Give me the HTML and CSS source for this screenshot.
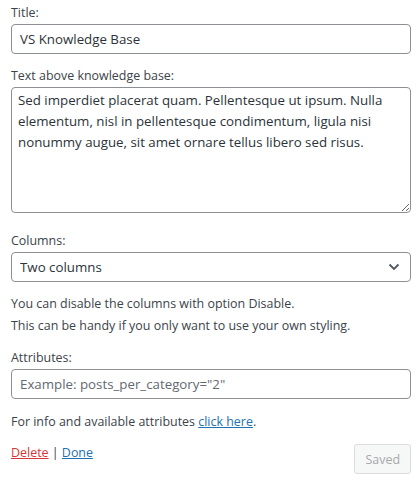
FILE: index.html
```html
<!DOCTYPE html>
<html>
<head>
<meta charset="utf-8">
<link rel="stylesheet" href="styles.css">
</head>
<body>
<form class="widget-form">
  <div class="field">
    <label class="label" for="title">Title:</label>
    <input class="text-input" id="title" type="text" value="VS Knowledge Base">
  </div>
  <div class="field field-text">
    <label class="label" for="intro">Text above knowledge base:</label>
    <textarea class="textarea" id="intro">Sed imperdiet placerat quam. Pellentesque ut ipsum. Nulla elementum, nisl in pellentesque condimentum, ligula nisi nonummy augue, sit amet ornare tellus libero sed risus.</textarea>
  </div>
  <div class="field field-select">
    <label class="label" for="cols">Columns:</label>
    <div class="select-wrap">
      <select class="select" id="cols"><option>Two columns</option></select>
      <svg class="chevron" width="12" height="8" viewBox="0 0 12 8"><path d="M1.5 1.5 L6 6 L10.5 1.5" fill="none" stroke="#50575e" stroke-width="1.8"/></svg>
    </div>
  </div>
  <p class="note">You can disable the columns with option Disable.<br>This can be handy if you only want to use your own styling.</p>
  <div class="field">
    <label class="label" for="attrs">Attributes:</label>
    <input class="text-input" id="attrs" type="text" placeholder="Example: posts_per_category=&quot;2&quot;">
  </div>
  <p class="info">For info and available attributes <a href="#" class="link">click here</a>.</p>
  <div class="actions">
    <div class="action-links"><a href="#" class="delete">Delete</a> | <a href="#" class="link">Done</a></div>
    <button type="button" class="saved" disabled>Saved</button>
  </div>
</form>
</body>
</html>
```
FILE: styles.css
```css
html, body {
  margin: 0;
  padding: 0;
  background: #fff;
}
body {
  font-family: "Open Sans", "Noto Sans", sans-serif;
  font-size: 12.45px;
  color: #3c434a;
}
.widget-form {
  width: 400px;
  margin: 0 0 0 11px;
  padding-top: 4px;
}
.field {
  display: flex;
  flex-direction: column;
}
.field-text {
  margin-top: 13px;
}
.field-select {
  margin-top: 19px;
}
.label {
  line-height: 18px;
  margin-bottom: 2px;
}
.text-input, .textarea, .select {
  box-sizing: border-box;
  width: 100%;
  font-family: inherit;
  font-size: 13.3px;
  color: #2c3338;
  border: 1px solid #8c8f94;
  border-radius: 4px;
  background: #fff;
  outline: none;
}
.text-input {
  height: 30px;
  padding: 0 8px;
  line-height: 2;
}
.text-input::placeholder {
  color: #646970;
}
.textarea {
  height: 126px;
  padding: 2px 6px;
  line-height: 21px;
  resize: vertical;
}
.select-wrap {
  position: relative;
}
.select {
  appearance: none;
  -webkit-appearance: none;
  height: 30px;
  padding: 0 24px 0 8px;
  line-height: 2;
}
.chevron {
  position: absolute;
  right: 11px;
  top: 11px;
  pointer-events: none;
}
.note {
  margin: 11px 0 12px;
  line-height: 22px;
}
.info {
  margin: 13px 0 0;
  line-height: 20px;
}
.link {
  color: #2271b1;
}
.delete {
  color: #d63638;
}
.actions {
  display: flex;
  justify-content: space-between;
  align-items: flex-start;
  margin-top: 12px;
}
.action-links {
  line-height: 18px;
}
.saved {
  box-sizing: border-box;
  height: 30px;
  padding: 0 10px;
  font-family: inherit;
  font-size: 12.45px;
  color: #a7aaad;
  background: #f6f7f7;
  border: 1px solid #dcdcde;
  border-radius: 3px;
  margin-top: 0;
}
```
